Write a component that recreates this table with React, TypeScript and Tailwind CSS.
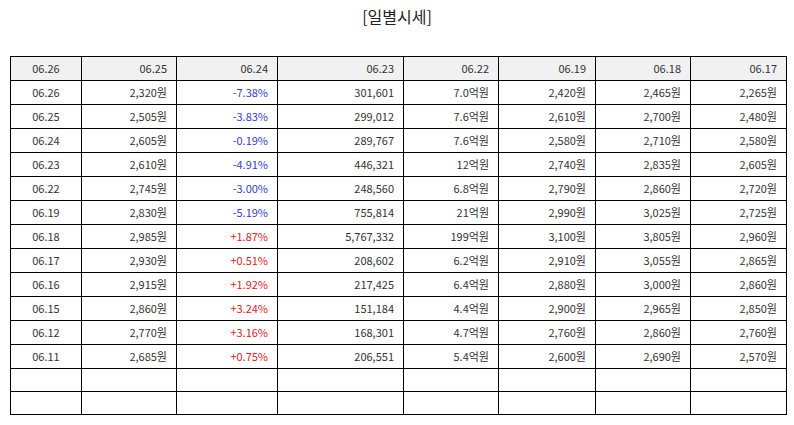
import * as React from "react";

type Row = [string, string, string, string, string, string, string, string];

const rows: Row[] = [
  ["06.26", "2,320원", "-7.38%", "301,601", "7.0억원", "2,420원", "2,465원", "2,265원"],
  ["06.25", "2,505원", "-3.83%", "299,012", "7.6억원", "2,610원", "2,700원", "2,480원"],
  ["06.24", "2,605원", "-0.19%", "289,767", "7.6억원", "2,580원", "2,710원", "2,580원"],
  ["06.23", "2,610원", "-4.91%", "446,321", "12억원", "2,740원", "2,835원", "2,605원"],
  ["06.22", "2,745원", "-3.00%", "248,560", "6.8억원", "2,790원", "2,860원", "2,720원"],
  ["06.19", "2,830원", "-5.19%", "755,814", "21억원", "2,990원", "3,025원", "2,725원"],
  ["06.18", "2,985원", "+1.87%", "5,767,332", "199억원", "3,100원", "3,805원", "2,960원"],
  ["06.17", "2,930원", "+0.51%", "208,602", "6.2억원", "2,910원", "3,055원", "2,865원"],
  ["06.16", "2,915원", "+1.92%", "217,425", "6.4억원", "2,880원", "3,000원", "2,860원"],
  ["06.15", "2,860원", "+3.24%", "151,184", "4.4억원", "2,900원", "2,965원", "2,850원"],
  ["06.12", "2,770원", "+3.16%", "168,301", "4.7억원", "2,760원", "2,860원", "2,760원"],
  ["06.11", "2,685원", "+0.75%", "206,551", "5.4억원", "2,600원", "2,690원", "2,570원"],
];

const headers = ["06.26", "06.25", "06.24", "06.23", "06.22", "06.19", "06.18", "06.17"];
const widths = ["w-[71px]", "w-[95px]", "w-[101px]", "w-[126px]", "w-[95px]", "w-[97px]", "w-[95px]", "w-[96px]"];

const font = { fontFamily: '"Noto Sans CJK KR", "Noto Sans", sans-serif' };

// every cell draws its own right and bottom rule; the table draws the top and left
const cell = "h-[23px] p-0 border-r border-b border-black";

export default function App() {
  return (
    <div className="w-[794px] h-[425px] bg-white text-[#333]" style={font}>
      <h1 className="pt-[5px] text-center text-[16px] leading-[22px] text-[#222]">[일별시세]</h1>
      <table className="mt-[29px] ml-[10px] w-[776px] table-fixed border-separate border-spacing-0 border-t border-l border-black text-[11px] leading-[23px]">
        <colgroup>
          {widths.map((w, i) => (
            <col key={i} className={w} />
          ))}
        </colgroup>
        <thead>
          <tr className="bg-[#f1f1f1]">
            {headers.map((h, i) => (
              <th key={i} className={`${cell} font-normal ${i === 0 ? "text-center" : "text-right pr-[9px]"}`}>
                {h}
              </th>
            ))}
          </tr>
        </thead>
        <tbody>
          {rows.map((r, ri) => (
            <tr key={ri}>
              {r.map((c, ci) => (
                <td
                  key={ci}
                  className={`${cell} ${ci === 0 ? "text-center" : "text-right pr-[9px]"} ${
                    ci === 2 ? (c.startsWith("-") ? "text-[#3a3ad0]" : "text-[#e0202a]") : ""
                  }`}
                >
                  {c}
                </td>
              ))}
            </tr>
          ))}
          {[0, 1].map((k) => (
            <tr key={`e${k}`}>
              {headers.map((_, ci) => (
                <td key={ci} className={cell} />
              ))}
            </tr>
          ))}
        </tbody>
      </table>
    </div>
  );
}
